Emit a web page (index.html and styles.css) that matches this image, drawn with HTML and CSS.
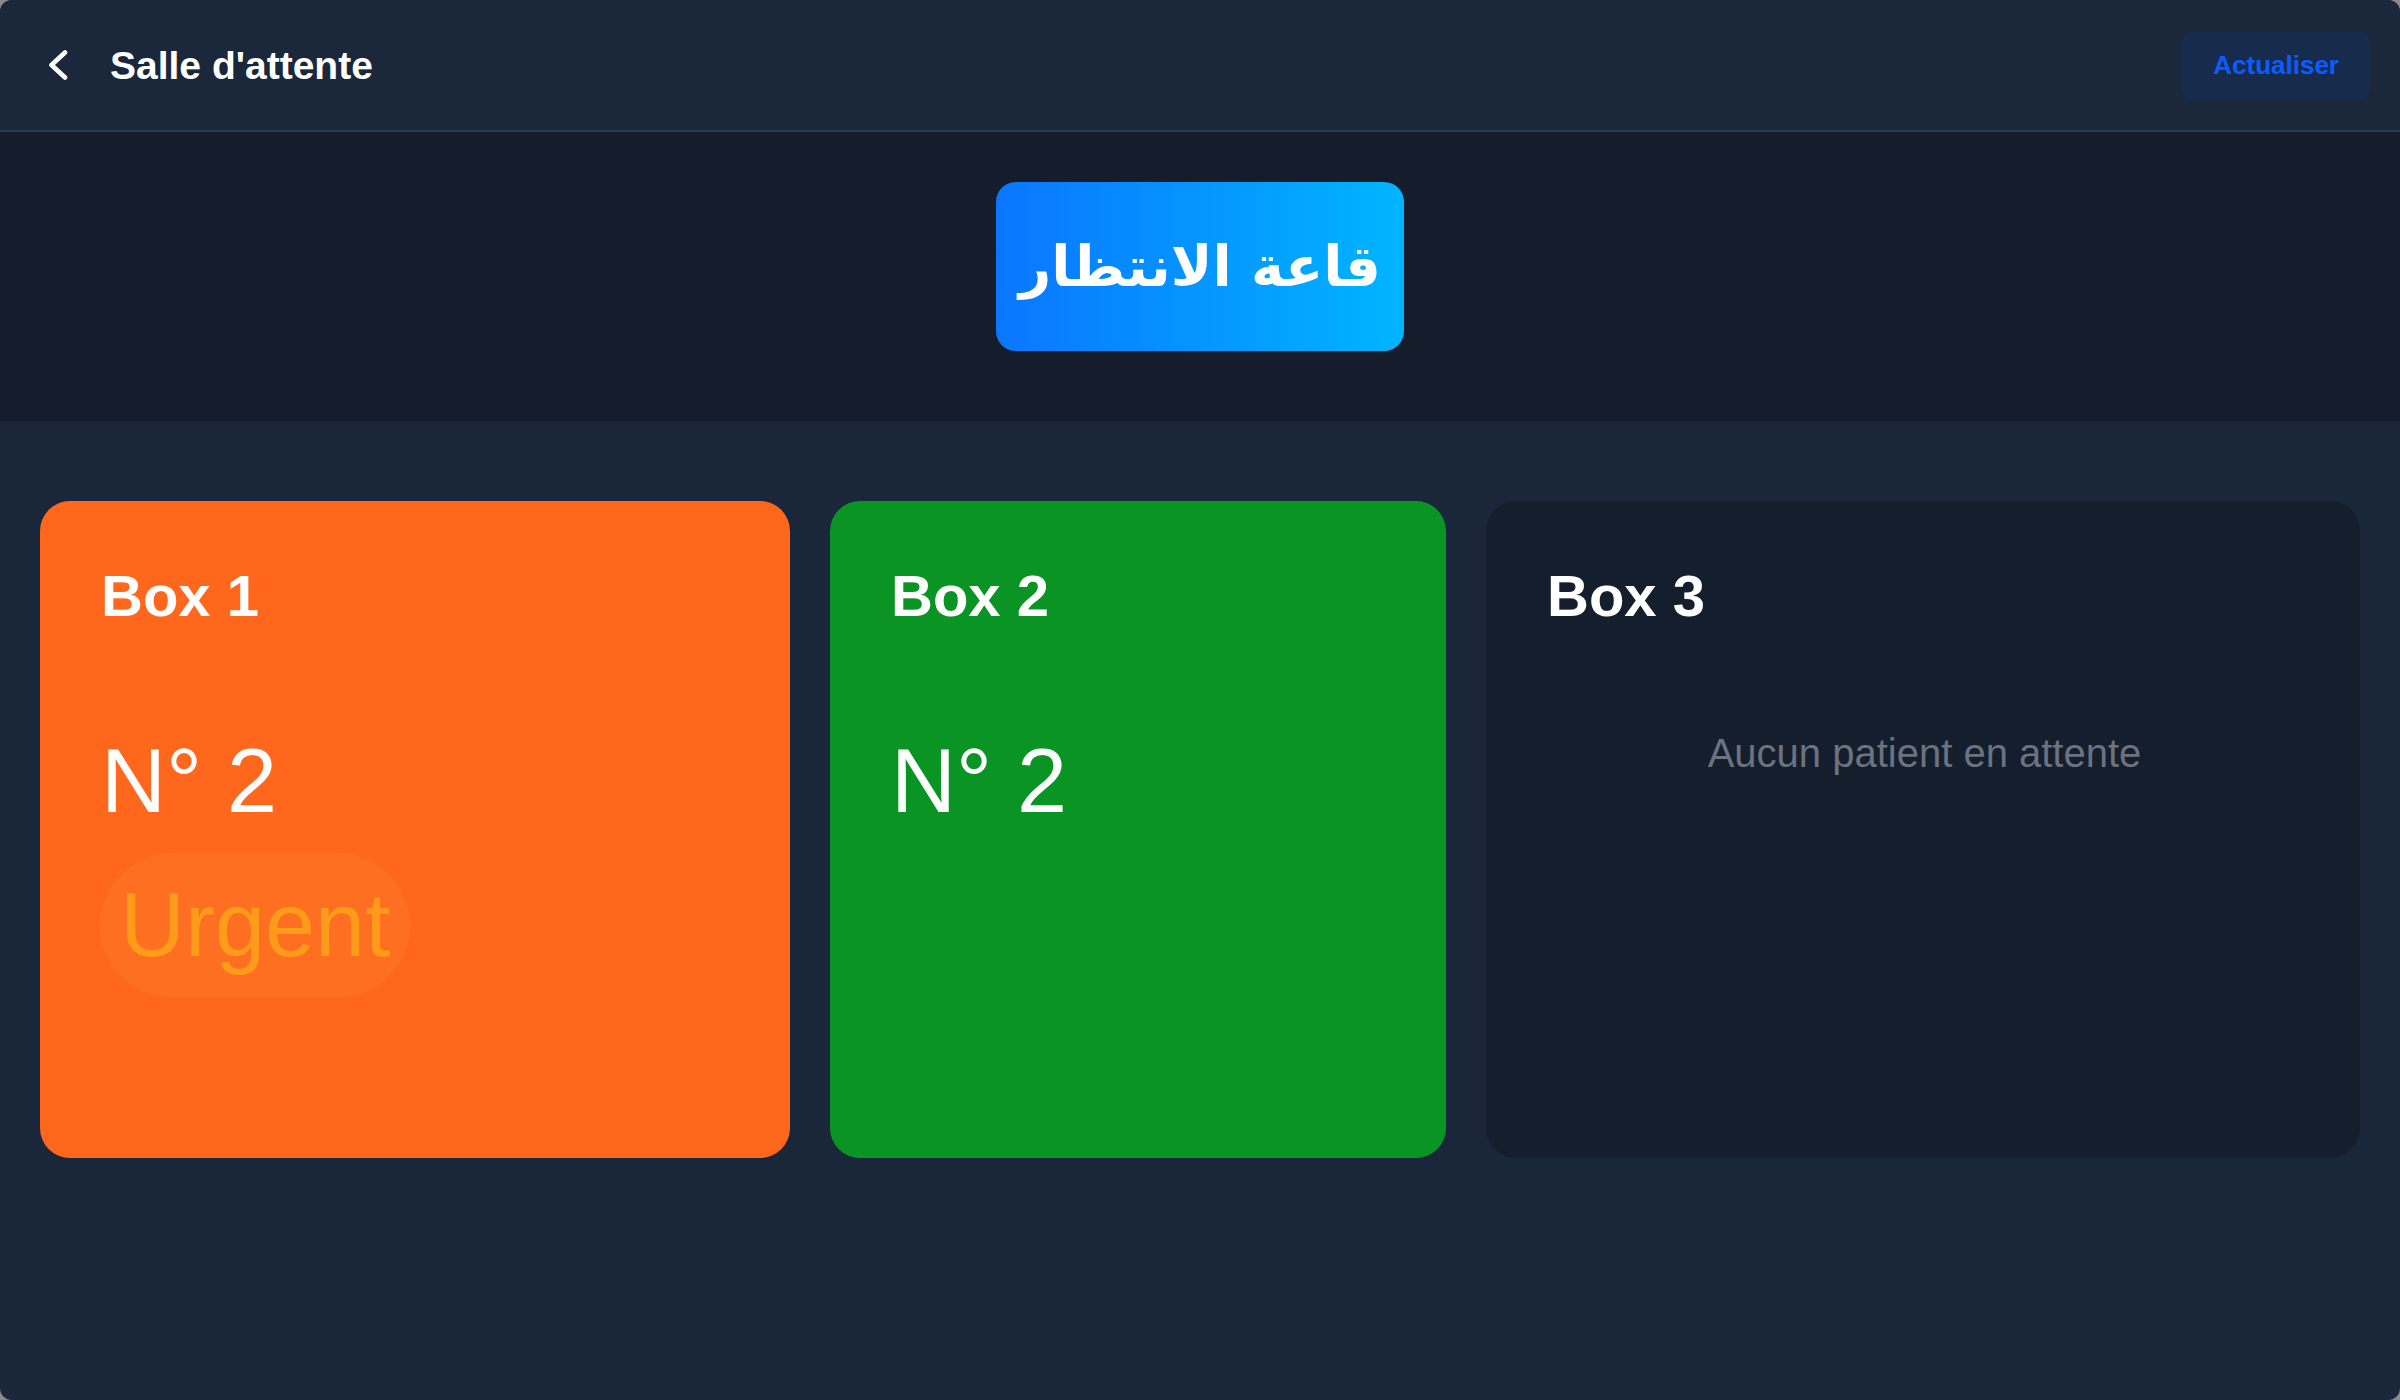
FILE: index.html
```html
<!DOCTYPE html>
<html lang="fr">
<head>
<meta charset="utf-8">
<title>Salle d'attente</title>
<link rel="stylesheet" href="styles.css">
</head>
<body>
<div class="app">
  <header class="topbar">
    <div class="topbar-left">
      <button class="back" aria-label="Retour">
        <svg width="20" height="32" viewBox="0 0 20 32"><polyline points="17,3.5 3.5,16 17,28.5" fill="none" stroke="#ffffff" stroke-width="4.6" stroke-linecap="round" stroke-linejoin="round"/></svg>
      </button>
      <h1 class="title">Salle d'attente</h1>
    </div>
    <button class="refresh">Actualiser</button>
  </header>

  <section class="hero">
    <div class="hero-badge" dir="rtl">قاعة الانتظار</div>
  </section>

  <main class="boxes">
    <div class="box box-urgent">
      <div class="box-title">Box 1</div>
      <div class="box-num">N° 2</div>
      <div class="badge">Urgent</div>
    </div>
    <div class="box box-normal">
      <div class="box-title">Box 2</div>
      <div class="box-num">N° 2</div>
    </div>
    <div class="box box-empty">
      <div class="box-title">Box 3</div>
      <div class="empty">Aucun patient en attente</div>
    </div>
  </main>
</div>
</body>
</html>
```

FILE: styles.css
```css
html, body {
  margin: 0;
  padding: 0;
}
body {
  background: #8a8a8a;
  font-family: "Liberation Sans", Arial, sans-serif;
}
.app {
  min-height: 1400px;
  background: #1a2639;
  border-radius: 12px;
  overflow: hidden;
}
.topbar {
  height: 130px;
  border-bottom: 2px solid #2b374a;
  background: #1b273a;
  display: flex;
  align-items: center;
  justify-content: space-between;
  padding: 0 30px 0 48px;
}
.topbar-left {
  display: flex;
  align-items: center;
}
.back {
  background: none;
  border: none;
  padding: 0;
  margin: 0;
  display: flex;
  width: 20px;
  height: 32px;
}
.title {
  margin: 0 0 0 42px;
  font-size: 39px;
  font-weight: 700;
  color: #ffffff;
  line-height: 45px;
}
.refresh {
  background: #172b4d;
  color: #0b5cff;
  font-family: "Liberation Sans", Arial, sans-serif;
  font-size: 26px;
  font-weight: 700;
  line-height: 30px;
  padding: 19px 31px 20px;
  border: none;
  border-radius: 10px;
}
.hero {
  background: #151d2c;
  padding: 50px 0 70px;
  display: flex;
  justify-content: center;
}
.hero-badge {
  width: 408px;
  height: 169px;
  box-sizing: border-box;
  border-radius: 20px;
  background: linear-gradient(90deg, #0a76ff 0%, #00b5ff 100%);
  display: flex;
  align-items: center;
  justify-content: center;
  color: #ffffff;
  font-family: "DejaVu Sans", sans-serif;
  font-weight: 700;
  font-size: 56px;
  white-space: nowrap;
}
.boxes {
  display: grid;
  grid-template-columns: 750fr 616fr 874fr;
  gap: 40px;
  padding: 80px 40px;
}
.box {
  height: 657px;
  box-sizing: border-box;
  padding: 60px 58px 60px 61px;
  border-radius: 30px;
  color: #ffffff;
}
.box-urgent { background: #ff671d; }
.box-normal { background: #0a9424; }
.box-empty { background: #151e2d; }
.box-title {
  font-size: 58px;
  font-weight: 700;
  line-height: 69px;
}
.box-num {
  margin-top: 100px;
  font-size: 90px;
  line-height: 103px;
}
.badge {
  display: inline-block;
  margin-top: 20px;
  margin-left: -1px;
  padding: 21px 20px;
  border-radius: 999px;
  font-size: 90px;
  line-height: 103px;
  color: #ff9b1b;
  background: #ff6f21;
}
.empty {
  margin-top: 100px;
  text-align: center;
  font-size: 40px;
  line-height: 46px;
  color: #6b7280;
}
```
